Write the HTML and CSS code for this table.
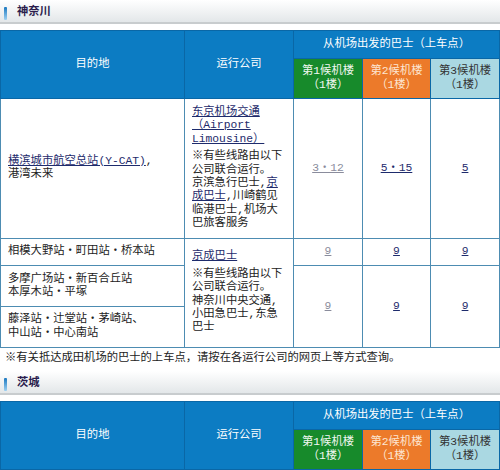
FILE: index.html
```html
<!DOCTYPE html>
<html lang="zh-CN">
<head>
<meta charset="utf-8">
<title>巴士</title>
<link rel="stylesheet" href="styles.css">
</head>
<body>
<section class="area">
  <h2 class="area-title"><span class="area-mark"></span>神奈川</h2>
  <table class="bus">
    <colgroup><col class="c-dest"><col class="c-co"><col class="c-t1"><col class="c-t2"><col class="c-t3"></colgroup>
    <thead>
      <tr class="h1"><th rowspan="2">目的地</th><th rowspan="2">运行公司</th><th colspan="3">从机场出发的巴士（上车点）</th></tr>
      <tr class="h2"><th class="t1">第1候机楼<br>（1楼）</th><th class="t2">第2候机楼<br>（1楼）</th><th class="t3">第3候机楼<br>（1楼）</th></tr>
    </thead>
    <tbody>
      <tr>
        <td class="dest"><a href="#">横滨城市航空总站(Y-CAT)</a>,<br>港湾未来</td>
        <td class="co"><a href="#">东京机场交通<br>（Airport<br>Limousine）</a><p class="co-note">※有些线路由以下<br>公司联合运行。<br>京滨急行巴士,<a href="#">京<br>成巴士</a>,川崎鹤见<br>临港巴士,机场大<br>巴旅客服务</p></td>
        <td class="num"><a class="dim" href="#">3・12</a></td>
        <td class="num"><a href="#">5・15</a></td>
        <td class="num"><a href="#">5</a></td>
      </tr>
      <tr>
        <td class="dest">相模大野站・町田站・桥本站</td>
        <td class="co" rowspan="3"><a href="#">京成巴士</a><p class="co-note">※有些线路由以下<br>公司联合运行。<br>神奈川中央交通,<br>小田急巴士,东急<br>巴士</p></td>
        <td class="num"><a class="dim" href="#">9</a></td>
        <td class="num"><a href="#">9</a></td>
        <td class="num"><a href="#">9</a></td>
      </tr>
      <tr>
        <td class="dest">多摩广场站・新百合丘站<br>本厚木站・平塚</td>
        <td class="num" rowspan="2"><a class="dim" href="#">9</a></td>
        <td class="num" rowspan="2"><a href="#">9</a></td>
        <td class="num" rowspan="2"><a href="#">9</a></td>
      </tr>
      <tr>
        <td class="dest">藤泽站・辻堂站・茅崎站、<br>中山站・中心南站</td>
      </tr>
    </tbody>
  </table>
  <p class="notice">※有关抵达成田机场的巴士的上车点，请按在各运行公司的网页上等方式查询。</p>
</section>
<section class="area">
  <h2 class="area-title"><span class="area-mark"></span>茨城</h2>
  <table class="bus">
    <colgroup><col class="c-dest"><col class="c-co"><col class="c-t1"><col class="c-t2"><col class="c-t3"></colgroup>
    <thead>
      <tr class="h1"><th rowspan="2">目的地</th><th rowspan="2">运行公司</th><th colspan="3">从机场出发的巴士（上车点）</th></tr>
      <tr class="h2"><th class="t1">第1候机楼<br>（1楼）</th><th class="t2">第2候机楼<br>（1楼）</th><th class="t3">第3候机楼<br>（1楼）</th></tr>
    </thead>
  </table>
</section>
</body>
</html>
```
FILE: styles.css
```css
html, body {
  margin: 0;
  padding: 0;
  background: #fff;
}
body {
  font-family: "Liberation Mono", "Noto Sans CJK SC", monospace;
  font-size: 11.3px;
  line-height: 13.4px;
  color: #222;
}
a {
  color: #1e2b6c;
  text-decoration: underline;
}
a.dim {
  color: #8a8c9c;
}
.area-title {
  margin: 0;
  height: 18px;
  padding: 4px 0 0 4px;
  display: flex;
  align-items: center;
  gap: 10px;
  font-size: 11.3px;
  font-weight: bold;
  color: #2b1d4d;
  background: linear-gradient(#ffffff, #e3e7e9);
  border-bottom: 2px solid #c8ccce;
}
.area-mark {
  width: 3px;
  height: 13px;
  border-radius: 1px;
  background: linear-gradient(#1a78c0, #9fd1f1);
}
.bus {
  width: 499px;
  margin-top: 6px;
  border-collapse: collapse;
  table-layout: fixed;
}
.c-dest { width: 184px; }
.c-co { width: 109px; }
.c-t1 { width: 69px; }
.c-t2 { width: 68px; }
.c-t3 { width: 69px; }
.bus th {
  padding: 0;
  font-weight: normal;
  text-align: center;
  vertical-align: middle;
  color: #fff;
  background: #0c7cc3;
  border: 1px solid #0a67a6;
}
.bus .h1 th {
  height: 27px;
}
.bus .h2 th {
  height: 39px;
}
.bus th.t1 {
  background: #178a2b;
  color: #f2f8f2;
}
.bus th.t2 {
  background: #ec7a2a;
  color: #fde6d2;
}
.bus th.t3 {
  background: #aad8e2;
  color: #333;
}
.bus td {
  padding: 6.5px 7px;
  vertical-align: middle;
  border: 1px solid #4d8cb2;
}
.bus td.co {
  padding: 7px 5px 7px 7px;
}
.bus td.num {
  padding: 6.5px 2px;
  text-align: center;
}
.co-note {
  margin: 4px 0 0;
}
.notice {
  margin: 4px 0 6px 5px;
}
```
